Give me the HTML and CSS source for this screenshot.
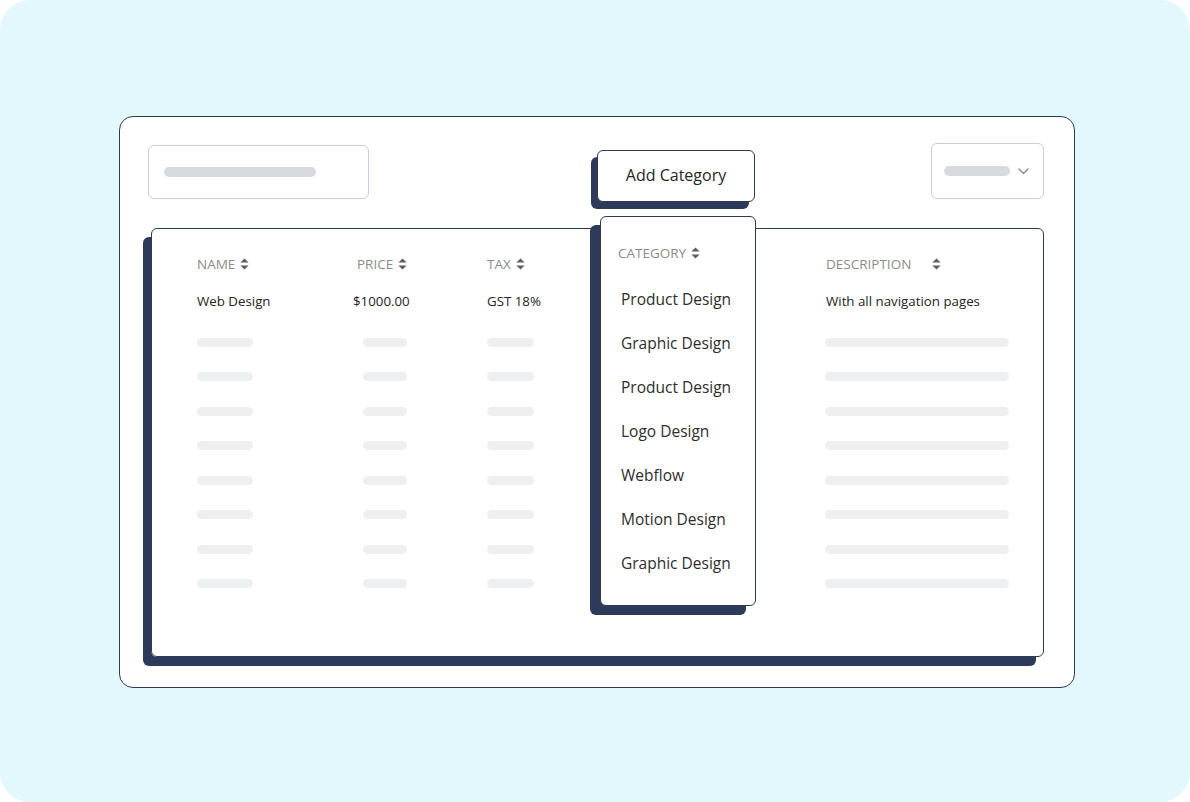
FILE: index.html
```html
<!DOCTYPE html>
<html lang="en">
<head>
    <meta charset="UTF-8">
    <meta name="viewport" content="width=device-width, initial-scale=1.0">
    <title>Categories</title>
    <link rel="stylesheet" href="styles.css">
</head>
<body>
    <div class="stage">
        <div class="panel">
            <div class="toolbar">
                <div class="search"><span class="ph ph-search"></span></div>
                <button type="button" class="add-btn">Add Category</button>
                <div class="select">
                    <span class="ph ph-select"></span>
                    <svg class="chev" width="11" height="7" viewBox="0 0 11 7"><polyline points="1,1 5.5,5.5 10,1" fill="none" stroke="#8a8a8a" stroke-width="1.4" stroke-linecap="round" stroke-linejoin="round"/></svg>
                </div>
            </div>

            <div class="table">
                <div class="row head">
                    <div>NAME <svg class="sort" width="9" height="12" viewBox="0 0 9 12"><path d="M4.5 0.5 L8.6 4.6 H0.4Z M0.4 7.4 H8.6 L4.5 11.5Z" fill="#5e5e62"/></svg></div>
                    <div>PRICE <svg class="sort" width="9" height="12" viewBox="0 0 9 12"><path d="M4.5 0.5 L8.6 4.6 H0.4Z M0.4 7.4 H8.6 L4.5 11.5Z" fill="#5e5e62"/></svg></div>
                    <div>TAX <svg class="sort" width="9" height="12" viewBox="0 0 9 12"><path d="M4.5 0.5 L8.6 4.6 H0.4Z M0.4 7.4 H8.6 L4.5 11.5Z" fill="#5e5e62"/></svg></div>
                    <div>DESCRIPTION <svg class="sort sort-far" width="9" height="12" viewBox="0 0 9 12"><path d="M4.5 0.5 L8.6 4.6 H0.4Z M0.4 7.4 H8.6 L4.5 11.5Z" fill="#5e5e62"/></svg></div>
                </div>
                <div class="row data">
                    <div>Web Design</div>
                    <div class="price">$1000.00</div>
                    <div>GST 18%</div>
                    <div>With all navigation pages</div>
                </div>
                <div class="rows" id="rows"></div>
            </div>

            <div class="menu">
                <div class="menu-head">CATEGORY <svg class="sort" width="9" height="12" viewBox="0 0 9 12"><path d="M4.5 0.5 L8.6 4.6 H0.4Z M0.4 7.4 H8.6 L4.5 11.5Z" fill="#5e5e62"/></svg></div>
                <ul>
                    <li>Product Design</li>
                    <li>Graphic Design</li>
                    <li>Product Design</li>
                    <li>Logo Design</li>
                    <li>Webflow</li>
                    <li>Motion Design</li>
                    <li>Graphic Design</li>
                </ul>
            </div>
        </div>
    </div>

    <script>
        // placeholder rows under the first entry
        const rows = document.getElementById('rows');
        for (let i = 0; i < 8; i++) {
            const row = document.createElement('div');
            row.classList.add('row', 'skeleton');
            ['b-name', 'b-price', 'b-tax', 'b-desc'].forEach(cls => {
                const cell = document.createElement('div');
                const bar = document.createElement('span');
                bar.classList.add('bar', cls);
                cell.appendChild(bar);
                row.appendChild(cell);
            });
            rows.appendChild(row);
        }
    </script>
</body>
</html>
```

FILE: styles.css
```css
body {
    margin: 0;
    padding: 0;
    background: #ffffff;
    font-family: "Open Sans", "Noto Sans", Arial, sans-serif;
}
.stage {
    width: 1190px;
    height: 802px;
    background-color: #e2f8fd;
    border-radius: 30px;
    overflow: hidden;
    padding-top: 116px;
    box-sizing: border-box;
}
.panel {
    position: relative;
    margin-left: 119px;
    width: 956px;
    height: 572px;
    box-sizing: border-box;
    background: #fff;
    border: 1.5px solid #2f3a56;
    border-radius: 14px;
    padding: 28px 30px 0 28px;
}
.toolbar {
    display: flex;
    align-items: flex-start;
}
.search {
    width: 221px;
    height: 54px;
    box-sizing: border-box;
    border: 1px solid #cccbe0;
    border-radius: 6px;
    display: flex;
    align-items: center;
    padding-left: 15px;
}
.ph {
    display: block;
    height: 10px;
    border-radius: 5px;
    background-color: #d7dadf;
}
.ph-search {
    width: 152px;
}
.add-btn {
    margin-left: 228px;
    margin-top: 5px;
    width: 158px;
    height: 52px;
    background: #fff;
    border: 1.5px solid #2f3a56;
    border-radius: 6px;
    box-shadow: -6px 7px 0 #2d3a5a;
    font-family: "Open Sans", "Noto Sans", Arial, sans-serif;
    font-size: 16px;
    color: #262626;
    padding: 0 0 2px 0;
}
.select {
    margin-left: auto;
    margin-top: -2px;
    width: 113px;
    height: 56px;
    box-sizing: border-box;
    border: 1px solid #cccbe0;
    border-radius: 6px;
    display: flex;
    align-items: center;
    padding-left: 12px;
}
.ph-select {
    width: 66px;
}
.chev {
    margin-left: 8px;
}
.table {
    margin-top: 26px;
    margin-left: 3px;
    height: 429px;
    box-sizing: border-box;
    border: 1.5px solid #2f3a56;
    border-radius: 6px;
    box-shadow: -8px 9px 0 #2d3a5a;
    padding: 26px 0 0 45px;
}
.row {
    display: grid;
    grid-template-columns: 160px 130px 339px 1fr;
    align-items: center;
}
.row.head {
    height: 18px;
    font-size: 13.5px;
    color: #8c8c8c;
}
.row.head div {
    display: flex;
    align-items: center;
}
.sort {
    margin-left: 5px;
}
.sort-far {
    margin-left: 21px;
}
.row.data {
    margin-top: 19px;
    height: 18px;
    font-size: 13.3px;
    color: #232323;
}
.price {
    margin-left: -4px;
}
.rows {
    margin-top: 15px;
}
.row.skeleton {
    height: 34.5px;
}
.bar {
    display: block;
    height: 9px;
    border-radius: 5px;
    background-color: #eeeff1;
}
.b-name {
    width: 56px;
}
.b-price {
    width: 44px;
    margin-left: 6px;
}
.b-tax {
    width: 47px;
}
.b-desc {
    width: 184px;
    margin-left: -1px;
}
.menu {
    position: absolute;
    left: 480px;
    top: 99px;
    width: 156px;
    height: 390px;
    box-sizing: border-box;
    background: #fff;
    border: 1.5px solid #2f3a56;
    border-radius: 6px;
    box-shadow: -10px 9px 0 #2d3a5a;
    padding: 27px 0 0 17px;
}
.menu-head {
    display: flex;
    align-items: center;
    height: 18px;
    font-size: 13.5px;
    color: #8c8c8c;
}
.menu ul {
    list-style: none;
    margin: 15px 0 0 0;
    padding: 0 0 0 3px;
}
.menu li {
    height: 44px;
    line-height: 44px;
    font-size: 15.5px;
    color: #2e2e2e;
}
```
